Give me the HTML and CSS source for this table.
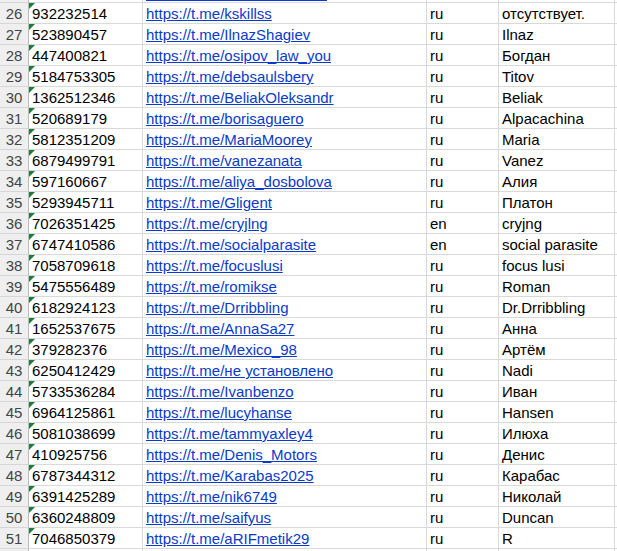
FILE: index.html
```html
<!DOCTYPE html>
<html lang="ru">
<head>
<meta charset="utf-8">
<title>Sheet</title>
<link rel="stylesheet" href="styles.css">
</head>
<body>
<div class="sheet">
  <div class="row"><div class="hd"></div><div class="c a"></div><div class="c b"><span class="link-tail"></span></div><div class="c cc"></div><div class="c d"></div><div class="c e"></div></div>
  <div class="row"><div class="hd">26</div><div class="c a num">932232514</div><div class="c b"><a href="#">https://t.me/kskillss</a></div><div class="c cc">ru</div><div class="c d">отсутствует.</div><div class="c e"></div></div>
  <div class="row"><div class="hd">27</div><div class="c a num">523890457</div><div class="c b"><a href="#">https://t.me/IlnazShagiev</a></div><div class="c cc">ru</div><div class="c d">Ilnaz</div><div class="c e"></div></div>
  <div class="row"><div class="hd">28</div><div class="c a num">447400821</div><div class="c b"><a href="#">https://t.me/osipov_law_you</a></div><div class="c cc">ru</div><div class="c d">Богдан</div><div class="c e"></div></div>
  <div class="row"><div class="hd">29</div><div class="c a num">5184753305</div><div class="c b"><a href="#">https://t.me/debsaulsbery</a></div><div class="c cc">ru</div><div class="c d">Titov</div><div class="c e"></div></div>
  <div class="row"><div class="hd">30</div><div class="c a num">1362512346</div><div class="c b"><a href="#">https://t.me/BeliakOleksandr</a></div><div class="c cc">ru</div><div class="c d">Beliak</div><div class="c e"></div></div>
  <div class="row"><div class="hd">31</div><div class="c a num">520689179</div><div class="c b"><a href="#">https://t.me/borisaguero</a></div><div class="c cc">ru</div><div class="c d">Alpacachina</div><div class="c e"></div></div>
  <div class="row"><div class="hd">32</div><div class="c a num">5812351209</div><div class="c b"><a href="#">https://t.me/MariaMoorey</a></div><div class="c cc">ru</div><div class="c d">Maria</div><div class="c e"></div></div>
  <div class="row"><div class="hd">33</div><div class="c a num">6879499791</div><div class="c b"><a href="#">https://t.me/vanezanata</a></div><div class="c cc">ru</div><div class="c d">Vanez</div><div class="c e"></div></div>
  <div class="row"><div class="hd">34</div><div class="c a num">597160667</div><div class="c b"><a href="#">https://t.me/aliya_dosbolova</a></div><div class="c cc">ru</div><div class="c d">Алия</div><div class="c e"></div></div>
  <div class="row"><div class="hd">35</div><div class="c a num">5293945711</div><div class="c b"><a href="#">https://t.me/Gligent</a></div><div class="c cc">ru</div><div class="c d">Платон</div><div class="c e"></div></div>
  <div class="row"><div class="hd">36</div><div class="c a num">7026351425</div><div class="c b"><a href="#">https://t.me/cryjlng</a></div><div class="c cc">en</div><div class="c d">cryjng</div><div class="c e"></div></div>
  <div class="row"><div class="hd">37</div><div class="c a num">6747410586</div><div class="c b"><a href="#">https://t.me/socialparasite</a></div><div class="c cc">en</div><div class="c d">social parasite</div><div class="c e"></div></div>
  <div class="row"><div class="hd">38</div><div class="c a num">7058709618</div><div class="c b"><a href="#">https://t.me/focuslusi</a></div><div class="c cc">ru</div><div class="c d">focus lusi</div><div class="c e"></div></div>
  <div class="row"><div class="hd">39</div><div class="c a num">5475556489</div><div class="c b"><a href="#">https://t.me/romikse</a></div><div class="c cc">ru</div><div class="c d">Roman</div><div class="c e"></div></div>
  <div class="row"><div class="hd">40</div><div class="c a num">6182924123</div><div class="c b"><a href="#">https://t.me/Drribbling</a></div><div class="c cc">ru</div><div class="c d">Dr.Drribbling</div><div class="c e"></div></div>
  <div class="row"><div class="hd">41</div><div class="c a num">1652537675</div><div class="c b"><a href="#">https://t.me/AnnaSa27</a></div><div class="c cc">ru</div><div class="c d">Анна</div><div class="c e"></div></div>
  <div class="row"><div class="hd">42</div><div class="c a num">379282376</div><div class="c b"><a href="#">https://t.me/Mexico_98</a></div><div class="c cc">ru</div><div class="c d">Артём</div><div class="c e"></div></div>
  <div class="row"><div class="hd">43</div><div class="c a num">6250412429</div><div class="c b"><a href="#">https://t.me/не установлено</a></div><div class="c cc">ru</div><div class="c d">Nadi</div><div class="c e"></div></div>
  <div class="row"><div class="hd">44</div><div class="c a num">5733536284</div><div class="c b"><a href="#">https://t.me/Ivanbenzo</a></div><div class="c cc">ru</div><div class="c d">Иван</div><div class="c e"></div></div>
  <div class="row"><div class="hd">45</div><div class="c a num">6964125861</div><div class="c b"><a href="#">https://t.me/lucyhanse</a></div><div class="c cc">ru</div><div class="c d">Hansen</div><div class="c e"></div></div>
  <div class="row"><div class="hd">46</div><div class="c a num">5081038699</div><div class="c b"><a href="#">https://t.me/tammyaxley4</a></div><div class="c cc">ru</div><div class="c d">Илюха</div><div class="c e"></div></div>
  <div class="row"><div class="hd">47</div><div class="c a num">410925756</div><div class="c b"><a href="#">https://t.me/Denis_Motors</a></div><div class="c cc">ru</div><div class="c d">Денис</div><div class="c e"></div></div>
  <div class="row"><div class="hd">48</div><div class="c a num">6787344312</div><div class="c b"><a href="#">https://t.me/Karabas2025</a></div><div class="c cc">ru</div><div class="c d">Карабас</div><div class="c e"></div></div>
  <div class="row"><div class="hd">49</div><div class="c a num">6391425289</div><div class="c b"><a href="#">https://t.me/nik6749</a></div><div class="c cc">ru</div><div class="c d">Николай</div><div class="c e"></div></div>
  <div class="row"><div class="hd">50</div><div class="c a num">6360248809</div><div class="c b"><a href="#">https://t.me/saifyus</a></div><div class="c cc">ru</div><div class="c d">Duncan</div><div class="c e"></div></div>
  <div class="row"><div class="hd">51</div><div class="c a num">7046850379</div><div class="c b"><a href="#">https://t.me/aRIFmetik29</a></div><div class="c cc">ru</div><div class="c d">R</div><div class="c e"></div></div>
  <div class="row"><div class="hd"></div><div class="c a"></div><div class="c b"></div><div class="c cc"></div><div class="c d"></div><div class="c e"></div></div>
</div>
</body>
</html>
```
FILE: styles.css
```css
html, body {
  margin: 0;
  padding: 0;
  background: #ffffff;
  overflow: hidden;
}
.sheet {
  margin-top: -18px;
  font-family: "Liberation Sans", Arial, sans-serif;
  font-size: 15px;
  color: #000;
}
.row {
  display: grid;
  grid-template-columns: 29px 114px 284px 72px 116px 2px;
  height: 21px;
}
.hd, .c {
  box-sizing: border-box;
  height: 21px;
  border-bottom: 1px solid #d9d9d9;
  border-right: 1px solid #d9d9d9;
  line-height: 19px;
  padding-top: 1px;
  white-space: nowrap;
  overflow: hidden;
}
.hd {
  background: #efefef;
  color: #444;
  text-align: center;
  border-right: 1px solid #bcbcbc;
  border-bottom: 1px solid #d6d6d6;
}
.c {
  padding-left: 3px;
}
.c.e {
  padding-left: 0;
  border-right: none;
}
.num {
  position: relative;
}
.num::before {
  content: "";
  position: absolute;
  top: 0;
  left: 0;
  width: 0;
  height: 0;
  border-top: 6px solid #1f7a3c;
  border-right: 6px solid transparent;
}
.b a {
  color: #0a3acb;
  text-decoration: underline;
}
.link-tail {
  display: block;
  width: 181px;
  height: 1px;
  margin-top: 17px;
  background: #0a3acb;
}
```
